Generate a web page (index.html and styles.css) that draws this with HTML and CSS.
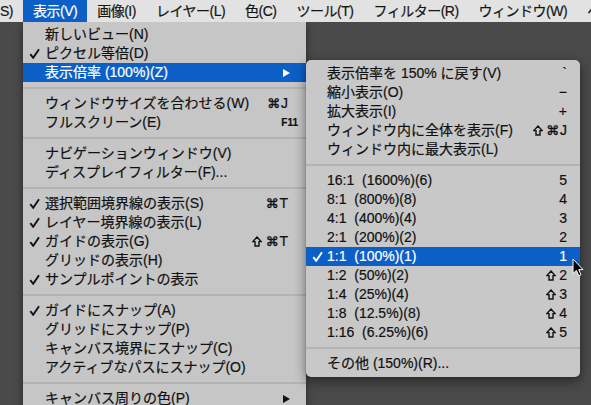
FILE: index.html
```html
<!DOCTYPE html>
<html lang="ja">
<head>
<meta charset="utf-8">
<title>表示メニュー</title>
<link rel="stylesheet" href="styles.css">
</head>
<body>
<div class="menubar">
  <span class="mb-item mb-cut">S)</span>
  <span class="mb-item active">表示(V)</span>
  <span class="mb-item">画像(I)</span>
  <span class="mb-item">レイヤー(L)</span>
  <span class="mb-item">色(C)</span>
  <span class="mb-item">ツール(T)</span>
  <span class="mb-item">フィルター(R)</span>
  <span class="mb-item">ウィンドウ(W)</span>
  <span class="mb-item">ヘルプ(H)</span>
</div>
<div class="stage">
  <div class="menu main">
    <div class="row"><span class="chk"></span><span class="label">新しいビュー(N)</span><span class="key"></span></div>
    <div class="row"><span class="chk"><svg viewBox="0 0 11 11" width="11" height="11"><path d="M1.3 6.2 L4.2 9.8 L10 1.2"/></svg></span><span class="label">ピクセル等倍(D)</span><span class="key"></span></div>
    <div class="row hl has-sub"><span class="chk"></span><span class="label">表示倍率 (100%)(Z)</span><span class="key"><svg class="arrow" viewBox="0 0 7 8" width="7" height="8"><polygon points="0,0 7,4 0,8"/></svg></span></div>
    <div class="sep"></div>
    <div class="row"><span class="chk"></span><span class="label">ウィンドウサイズを合わせる(W)</span><span class="key"><span class="sym">⌘</span>J</span></div>
    <div class="row fkey"><span class="chk"></span><span class="label">フルスクリーン(E)</span><span class="key">F11</span></div>
    <div class="sep"></div>
    <div class="row"><span class="chk"></span><span class="label">ナビゲーションウィンドウ(V)</span><span class="key"></span></div>
    <div class="row"><span class="chk"></span><span class="label">ディスプレイフィルター(F)...</span><span class="key"></span></div>
    <div class="sep"></div>
    <div class="row"><span class="chk"><svg viewBox="0 0 11 11" width="11" height="11"><path d="M1.3 6.2 L4.2 9.8 L10 1.2"/></svg></span><span class="label">選択範囲境界線の表示(S)</span><span class="key"><span class="sym">⌘</span>T</span></div>
    <div class="row"><span class="chk"><svg viewBox="0 0 11 11" width="11" height="11"><path d="M1.3 6.2 L4.2 9.8 L10 1.2"/></svg></span><span class="label">レイヤー境界線の表示(L)</span><span class="key"></span></div>
    <div class="row"><span class="chk"><svg viewBox="0 0 11 11" width="11" height="11"><path d="M1.3 6.2 L4.2 9.8 L10 1.2"/></svg></span><span class="label">ガイドの表示(G)</span><span class="key"><svg class="shift" viewBox="0 0 10 11" width="10" height="11"><path d="M5 1 L9.2 5.6 L7 5.6 L7 10 L3 10 L3 5.6 L0.8 5.6 Z"/></svg><span class="sym">⌘</span>T</span></div>
    <div class="row"><span class="chk"></span><span class="label">グリッドの表示(H)</span><span class="key"></span></div>
    <div class="row"><span class="chk"><svg viewBox="0 0 11 11" width="11" height="11"><path d="M1.3 6.2 L4.2 9.8 L10 1.2"/></svg></span><span class="label">サンプルポイントの表示</span><span class="key"></span></div>
    <div class="sep"></div>
    <div class="row"><span class="chk"><svg viewBox="0 0 11 11" width="11" height="11"><path d="M1.3 6.2 L4.2 9.8 L10 1.2"/></svg></span><span class="label">ガイドにスナップ(A)</span><span class="key"></span></div>
    <div class="row"><span class="chk"></span><span class="label">グリッドにスナップ(P)</span><span class="key"></span></div>
    <div class="row"><span class="chk"></span><span class="label">キャンバス境界にスナップ(C)</span><span class="key"></span></div>
    <div class="row"><span class="chk"></span><span class="label">アクティブなパスにスナップ(O)</span><span class="key"></span></div>
    <div class="sep"></div>
    <div class="row has-sub"><span class="chk"></span><span class="label">キャンバス周りの色(P)</span><span class="key"><svg class="arrow" viewBox="0 0 7 8" width="7" height="8"><polygon points="0,0 7,4 0,8"/></svg></span></div>
  </div>
  <div class="menu sub">
    <div class="row"><span class="chk"></span><span class="label">表示倍率を 150% に戻す(V)</span><span class="key">`</span></div>
    <div class="row"><span class="chk"></span><span class="label">縮小表示(O)</span><span class="key">−</span></div>
    <div class="row"><span class="chk"></span><span class="label">拡大表示(I)</span><span class="key">+</span></div>
    <div class="row"><span class="chk"></span><span class="label">ウィンドウ内に全体を表示(F)</span><span class="key"><svg class="shift" viewBox="0 0 10 11" width="10" height="11"><path d="M5 1 L9.2 5.6 L7 5.6 L7 10 L3 10 L3 5.6 L0.8 5.6 Z"/></svg><span class="sym">⌘</span>J</span></div>
    <div class="row"><span class="chk"></span><span class="label">ウィンドウ内に最大表示(L)</span><span class="key"></span></div>
    <div class="sep"></div>
    <div class="row"><span class="chk"></span><span class="label">16:1&nbsp; (1600%)(6)</span><span class="key">5</span></div>
    <div class="row"><span class="chk"></span><span class="label">8:1&nbsp; (800%)(8)</span><span class="key">4</span></div>
    <div class="row"><span class="chk"></span><span class="label">4:1&nbsp; (400%)(4)</span><span class="key">3</span></div>
    <div class="row"><span class="chk"></span><span class="label">2:1&nbsp; (200%)(2)</span><span class="key">2</span></div>
    <div class="row hl"><span class="chk"><svg viewBox="0 0 11 11" width="11" height="11"><path d="M1.3 6.2 L4.2 9.8 L10 1.2"/></svg></span><span class="label">1:1&nbsp; (100%)(1)</span><span class="key">1</span></div>
    <div class="row"><span class="chk"></span><span class="label">1:2&nbsp; (50%)(2)</span><span class="key"><svg class="shift" viewBox="0 0 10 11" width="10" height="11"><path d="M5 1 L9.2 5.6 L7 5.6 L7 10 L3 10 L3 5.6 L0.8 5.6 Z"/></svg>2</span></div>
    <div class="row"><span class="chk"></span><span class="label">1:4&nbsp; (25%)(4)</span><span class="key"><svg class="shift" viewBox="0 0 10 11" width="10" height="11"><path d="M5 1 L9.2 5.6 L7 5.6 L7 10 L3 10 L3 5.6 L0.8 5.6 Z"/></svg>3</span></div>
    <div class="row"><span class="chk"></span><span class="label">1:8&nbsp; (12.5%)(8)</span><span class="key"><svg class="shift" viewBox="0 0 10 11" width="10" height="11"><path d="M5 1 L9.2 5.6 L7 5.6 L7 10 L3 10 L3 5.6 L0.8 5.6 Z"/></svg>4</span></div>
    <div class="row"><span class="chk"></span><span class="label">1:16&nbsp; (6.25%)(6)</span><span class="key"><svg class="shift" viewBox="0 0 10 11" width="10" height="11"><path d="M5 1 L9.2 5.6 L7 5.6 L7 10 L3 10 L3 5.6 L0.8 5.6 Z"/></svg>5</span></div>
    <div class="sep"></div>
    <div class="row"><span class="chk"></span><span class="label">その他 (150%)(R)...</span><span class="key"></span></div>
  </div>
  <svg class="cursor" viewBox="0 0 12 19" width="12" height="19"><path d="M1 1 L1 15.5 L4.4 12.4 L6.8 17.8 L9 16.8 L6.7 11.6 L11 11.6 Z"/></svg>
</div>
</body>
</html>
```

FILE: styles.css
```css
html, body {
  margin: 0;
  padding: 0;
}
body {
  width: 591px;
  height: 405px;
  overflow: hidden;
  background: #4a4a4a;
  font-family: "Liberation Sans", "Noto Sans CJK JP", sans-serif;
  font-size: 14px;
  color: #111;
  -webkit-text-stroke: 0.2px currentColor;
}
.menubar {
  height: 22px;
  background: #e2e2e2;
  display: flex;
  white-space: nowrap;
  overflow: hidden;
  position: relative;
  z-index: 2;
}
.mb-item {
  flex: none;
  padding: 0 10px;
  line-height: 22px;
  letter-spacing: -0.5px;
  color: #151515;
}
.mb-item.mb-cut {
  padding-left: 0;
}
.mb-item.active {
  background: #0c5fc6;
  color: #fff;
}
.stage {
  position: relative;
  display: flex;
  align-items: flex-start;
  padding-left: 23px;
}
.menu {
  flex: none;
  background: #c6c6c6;
}
.menu.main {
  width: 283px;
  padding-top: 3px;
  box-shadow: 0 2px 8px rgba(0, 0, 0, 0.45);
  position: relative;
  z-index: 1;
}
.menu.sub {
  width: 274px;
  margin-top: 38px;
  padding: 4px 0;
  border-radius: 5px;
  box-shadow: 0 4px 12px rgba(0, 0, 0, 0.5), 0 0 1px rgba(0, 0, 0, 0.5);
  position: relative;
  z-index: 1;
  background: #c8c8c8;
}
.row {
  display: grid;
  grid-template-columns: 22px 1fr auto;
  align-items: center;
  height: 19px;
  line-height: 19px;
  padding-right: 18px;
  white-space: nowrap;
}
.sub .row {
  grid-template-columns: 21px 1fr auto;
  padding-right: 13px;
}
.row.has-sub {
  padding-right: 16px;
}
.row.fkey {
  padding-right: 8px;
}
.row.fkey .key {
  font-size: 10px;
  font-weight: bold;
}
.row.hl {
  background: #0c5fc6;
  color: #fff;
}
.chk {
  display: flex;
  align-items: center;
  height: 19px;
}
.chk svg {
  margin-left: 6px;
  fill: none;
  stroke: #111;
  stroke-width: 1.9;
}
.hl .chk svg {
  stroke: #fff;
}
.label {
  overflow: hidden;
}
.key {
  font-family: "Liberation Sans", "DejaVu Sans", sans-serif;
  text-align: right;
  display: flex;
  align-items: center;
  justify-content: flex-end;
  height: 19px;
}
.sym {
  font-family: "DejaVu Sans", sans-serif;
  font-size: 13px;
  -webkit-text-stroke: 0.4px currentColor;
  margin-right: 1px;
}
.shift {
  fill: none;
  stroke: #111;
  stroke-width: 1.4;
  stroke-linejoin: miter;
  margin-right: 3px;
  margin-top: -1px;
}
.arrow {
  fill: #111;
}
.hl .arrow {
  fill: #fff;
}
.sep {
  height: 2px;
  margin: 5px 0;
  background: #b3b3b3;
}
.cursor {
  position: absolute;
  left: 572px;
  top: 236px;
  z-index: 3;
  fill: #000;
  stroke: #fff;
  stroke-width: 1;
  stroke-linejoin: round;
  -webkit-text-stroke: 0;
}
```
